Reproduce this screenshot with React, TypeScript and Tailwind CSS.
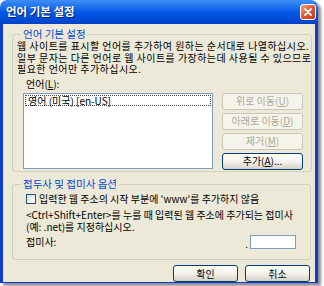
import React from "react";

const font = { fontFamily: '"Noto Sans CJK KR", "Noto Sans", sans-serif' };

interface BtnProps {
  children: React.ReactNode;
  disabled?: boolean;
  className?: string;
}

const XpButton = ({ children, disabled, className = "" }: BtnProps) => (
  <div
    className={`flex h-[17px] items-center justify-center rounded-[3px] border text-[10px] leading-none ${
      disabled
        ? "border-[#C9C7BA] bg-[#F5F4EA] text-[#ACA899]"
        : "border-[#003C74] bg-gradient-to-b from-white via-[#F4F3EE] to-[#D6D0C5] text-black"
    } ${className}`}
  >
    {children}
  </div>
);

const GroupBox = ({
  title,
  children,
  className = "",
}: {
  title: string;
  children: React.ReactNode;
  className?: string;
}) => (
  <fieldset
    className={`rounded-[3px] border border-[#D0D0BF] px-[4px] ${className}`}
  >
    <legend className="ml-[4px] px-[2px] text-[10.5px] leading-[12px] text-[#0046D5]">
      {title}
    </legend>
    {children}
  </fieldset>
);

// one line of static text with a fixed line box
const Line = ({
  children,
  className = "",
}: {
  children: React.ReactNode;
  className?: string;
}) => (
  <div
    className={`h-[11.5px] overflow-visible whitespace-nowrap leading-[11.5px] text-black ${className}`}
  >
    {children}
  </div>
);

export default function App() {
  return (
    <div className="h-[286px] w-[324px] bg-white" style={font}>
      <div className="flex h-[283px] w-[318px] flex-col overflow-hidden rounded-t-[7px] shadow-[3px_3px_3px_rgba(0,0,0,0.45)]">
        {/* Title bar */}
        <div className="flex h-[24px] shrink-0 items-center justify-between bg-gradient-to-b from-[#3D8EF7] via-[#0659E8] to-[#0042C8] pl-[6px] pr-[2px]">
          <span className="text-[11.5px] font-bold leading-none text-white [text-shadow:1px_1px_0_#0A1E6E]">
            언어 기본 설정
          </span>
          <div className="flex h-[16px] w-[16px] items-center justify-center rounded-[3px] border border-white bg-gradient-to-br from-[#F0A088] via-[#E2552F] to-[#C23A16]">
            <svg width="10" height="10" viewBox="0 0 10 10">
              <path
                d="M2 2 L8 8 M8 2 L2 8"
                stroke="white"
                strokeWidth="1.8"
                strokeLinecap="round"
              />
            </svg>
          </div>
        </div>

        {/* Body */}
        <div className="flex flex-1 flex-col border-x-[3px] border-b-[3px] border-[#0B3CD6] bg-[#ECE9D8] pl-[9px] pr-[4px] pt-[4px]">
          <GroupBox title="언어 기본 설정" className="h-[144px]">
            <div className="-mr-[4px] text-[10px] tracking-[0.45px]">
              <Line>웹 사이트를 표시할 언어를 추가하여 원하는 순서대로 나열하십시오.</Line>
              <Line>일부 문자는 다른 언어로 웹 사이트를 가장하는데 사용될 수 있으므로</Line>
              <Line>필요한 언어만 추가하십시오.</Line>
            </div>
            <div className="ml-[9px] mt-[3px] text-[10px] leading-[12px] text-black">
              언어(<u>L</u>):
            </div>
            <div className="ml-[6px] mt-[3px] flex gap-[9px]">
              <div className="h-[76px] w-[190px] border border-[#7F9DB9] bg-white p-[1px]">
                <div className="border border-dotted border-[#444] px-[2px] text-[10px] leading-[9px] text-black">
                  영어 (미국) [en-US]
                </div>
              </div>
              <div className="flex w-[81px] flex-col gap-[3px]">
                <XpButton disabled>
                  위로 이동(<u>U</u>)
                </XpButton>
                <XpButton disabled>
                  아래로 이동(<u>D</u>)
                </XpButton>
                <XpButton disabled>
                  제거(<u>M</u>)
                </XpButton>
                <XpButton>
                  추가(<u>A</u>)...
                </XpButton>
              </div>
            </div>
          </GroupBox>

          <GroupBox title="접두사 및 접미사 옵션" className="mt-[6px] h-[82px]">
            <div className="ml-[9px] mt-[3px] flex items-center gap-[3px]">
              <div className="h-[10px] w-[10px] border border-[#1C5180] bg-gradient-to-br from-[#DCDCD7] to-white" />
              <span className="text-[10px] leading-[12px] text-black">
                입력한 웹 주소의 시작 부분에 'www'를 추가하지 않음
              </span>
            </div>
            <div className="ml-[9px] mt-[4px] text-[10px]">
              <Line>&lt;Ctrl+Shift+Enter&gt;를 누를 때 입력된 웹 주소에 추가되는 접미사</Line>
              <Line>(예: .net)를 지정하십시오.</Line>
            </div>
            <div className="ml-[9px] mr-[10px] mt-[3px] flex items-center justify-between">
              <span className="text-[10px] leading-[12px] text-black">
                접미사:
              </span>
              <div className="flex items-end gap-[2px]">
                <span className="text-[10px] leading-[10px] text-black">.</span>
                <div className="h-[14px] w-[46px] border border-[#7F9DB9] bg-white" />
              </div>
            </div>
          </GroupBox>

          <div className="mt-[5px] flex justify-end gap-[7px] pr-[1px]">
            <XpButton className="w-[65px]">확인</XpButton>
            <XpButton className="w-[65px]">취소</XpButton>
          </div>
        </div>
      </div>
    </div>
  );
}
